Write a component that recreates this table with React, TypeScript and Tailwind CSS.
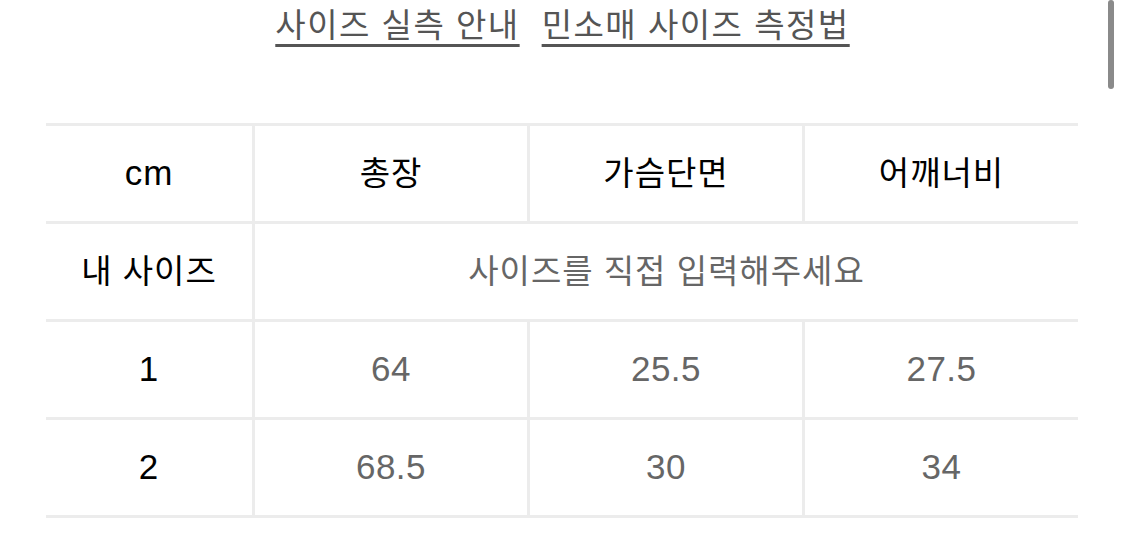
import React from "react";

const font = { fontFamily: '"Liberation Sans", "Noto Sans CJK KR", sans-serif' };

const rows = [
  { label: "1", values: ["64", "25.5", "27.5"] },
  { label: "2", values: ["68.5", "30", "34"] },
];

function Cell({ children, last, className = "" }: { children: React.ReactNode; last?: boolean; className?: string }) {
  return (
    <div
      className={`flex h-[98px] items-center justify-center border-b-[3px] border-[#ececec] ${
        last ? "" : "border-r-[3px]"
      } ${className}`}
    >
      {children}
    </div>
  );
}

export default function App() {
  return (
    <div className="relative h-[533px] w-[1125px] overflow-hidden bg-white" style={font}>
      {/* links */}
      <div className="flex justify-center gap-[22px] pt-[4px] text-[33px] leading-[44px] tracking-[1.5px] text-[#555]">
        <span className="underline decoration-[3px] underline-offset-[7px]">사이즈 실측 안내</span>
        <span className="underline decoration-[3px] underline-offset-[7px]">민소매 사이즈 측정법</span>
      </div>

      {/* table */}
      <div className="ml-[46px] mt-[75px] w-[1032px] border-t-[3px] border-[#ececec]">
        <div className="grid grid-cols-[209px_275px_275px_273px] text-[33px] tracking-[1px]">
          <Cell className="text-[35px] text-black">cm</Cell>
          <Cell className="text-black">총장</Cell>
          <Cell className="text-black">가슴단면</Cell>
          <Cell last className="text-black">어깨너비</Cell>

          <Cell className="text-black">내 사이즈</Cell>
          <div className="col-span-3 flex h-[98px] items-center justify-center border-b-[3px] border-[#ececec] text-[#666]">
            사이즈를 직접 입력해주세요
          </div>

          {rows.map((r) => (
            <React.Fragment key={r.label}>
              <Cell className="text-[35px] text-black">{r.label}</Cell>
              {r.values.map((v, i) => (
                <Cell key={i} last={i === 2} className="text-[35px] tracking-[0.5px] text-[#666]">
                  {v}
                </Cell>
              ))}
            </React.Fragment>
          ))}
        </div>
      </div>

      {/* scrollbar */}
      <div className="absolute right-[11px] top-0 h-[89px] w-[6px] rounded-full bg-[#8a8a8a]" />
    </div>
  );
}
